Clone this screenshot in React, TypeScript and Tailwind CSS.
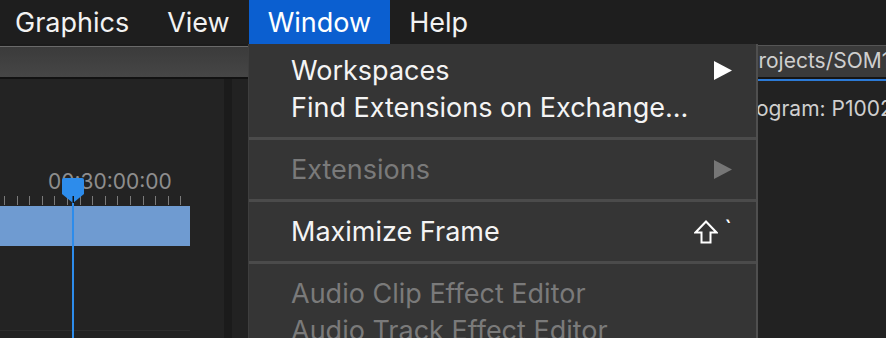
import type { ReactNode } from "react";

const font = { fontFamily: 'Inter, "Noto Sans", sans-serif' };

function MenuBarItem({ children, active }: { children: ReactNode; active?: boolean }) {
  return (
    <div
      className={`flex h-full items-center px-[19px] text-[27px] leading-none ${
        active ? "bg-[#0b5fd0] text-white" : "text-[#f2f2f2]"
      }`}
    >
      {children}
    </div>
  );
}

function Arrow({ disabled }: { disabled?: boolean }) {
  return (
    <svg width="18" height="19" viewBox="0 0 18 19">
      <path d="M0 0 L18 9.5 L0 19 Z" fill={disabled ? "#767676" : "#ffffff"} />
    </svg>
  );
}

function MenuItem({ label, disabled, right }: { label: string; disabled?: boolean; right?: ReactNode }) {
  return (
    <div className="flex h-[37px] items-center justify-between pl-[42px] pr-[24px]">
      <span className={`text-[27px] leading-none ${disabled ? "text-[#7a7a7a]" : "text-[#f4f4f4]"}`}>{label}</span>
      {right}
    </div>
  );
}

function Separator() {
  return <div className="my-[11px] h-[3px] bg-[#4b4b4b]" />;
}

function ShiftKey() {
  return (
    <div className="flex items-start gap-[6px]">
      <svg width="24" height="24" viewBox="0 0 24 24">
        <path d="M12 1.5 L22.5 12.5 H16.5 V22.5 H7.5 V12.5 H1.5 Z" fill="none" stroke="#ffffff" strokeWidth="2" strokeLinejoin="miter" />
      </svg>
      <span className="-mt-[2px] text-[24px] leading-none text-white">`</span>
    </div>
  );
}

function Timeline() {
  const ticks = Array.from({ length: 15 }, (_, i) => i);
  return (
    <div className="relative h-full">
      <div className="absolute left-[48px] top-[92px] text-[21px] leading-none text-[#8e8e8e]">00:30:00:00</div>
      <div className="absolute left-[4px] top-[117px] flex gap-[11.6px]">
        {ticks.map((t) => (
          <div key={t} className="h-[9px] w-px bg-[#7a7a7a]" />
        ))}
      </div>
      <div className="absolute left-0 top-[127px] h-[40px] w-[190px] bg-[#6f9bd1]" />
      <div className="absolute left-0 top-[251px] h-px w-[190px] bg-[#2e2e2e]" />
      <div className="absolute left-[72px] top-[116px] h-[200px] w-[2px] bg-[#2d8ceb]" />
      <svg className="absolute left-[62px] top-[99px]" width="22" height="25" viewBox="0 0 22 25">
        <path d="M2 0 H20 Q22 0 22 2 V16 L11 25 L0 16 V2 Q0 0 2 0 Z" fill="#2d8ceb" />
        <rect x="10.5" y="18" width="1.5" height="7" fill="#111" />
      </svg>
    </div>
  );
}

export default function App() {
  return (
    <div className="relative h-[338px] w-[886px] overflow-hidden bg-[#222222]" style={font}>
      <div className="flex h-[44px] bg-[#1e1e1e]">
        <div className="-ml-[4px] flex h-full">
          <MenuBarItem>Graphics</MenuBarItem>
          <MenuBarItem>View</MenuBarItem>
          <MenuBarItem active>Window</MenuBarItem>
          <MenuBarItem>Help</MenuBarItem>
        </div>
      </div>

      <div className="flex h-[294px]">
        <div className="flex w-[248px] flex-col">
          <div className="h-[2px] bg-[#1b1b1b]" />
          <div className="h-px bg-[#6a6a6a]" />
          <div className="h-[30px] bg-gradient-to-b from-[#3b3b3b] to-[#464646]" />
          <div className="h-[2px] bg-[#121212]" />
          <div className="flex flex-1">
            <div className="w-[224px] bg-[#232323]">
              <Timeline />
            </div>
            <div className="w-[8px] bg-[#1b1b1b]" />
            <div className="flex-1 bg-[#222222]" />
          </div>
        </div>

        <div className="flex-1 bg-[#222222]" />

        <div className="flex w-[128px] flex-col">
          <div className="h-px bg-[#1e1e1e]" />
          <div className="h-[32px] border-t border-[#555555] bg-[#3a3a3a]">
            <div className="-ml-[13px] whitespace-nowrap pt-[4px] text-[21px] leading-none text-[#cfcfcf]">Projects/SOM1</div>
          </div>
          <div className="h-[2px] bg-[#151515]" />
          <div className="h-[2px] bg-[#2c7ad6]" />
          <div className="-ml-[23px] whitespace-nowrap pt-[17px] text-[21px] leading-none text-[#cfcfcf]">Program: P1002</div>
        </div>
      </div>

      <div className="absolute left-[248px] top-[44px] z-10 h-[294px] w-[510px] border-l border-r-2 border-[#4f4f4f] border-l-[#3e3e3e] bg-[#353535] pt-[8px]">
        <MenuItem label="Workspaces" right={<Arrow />} />
        <MenuItem label="Find Extensions on Exchange..." />
        <Separator />
        <MenuItem label="Extensions" disabled right={<Arrow disabled />} />
        <Separator />
        <MenuItem label="Maximize Frame" right={<ShiftKey />} />
        <Separator />
        <MenuItem label="Audio Clip Effect Editor" disabled />
        <MenuItem label="Audio Track Effect Editor" disabled />
      </div>
    </div>
  );
}
